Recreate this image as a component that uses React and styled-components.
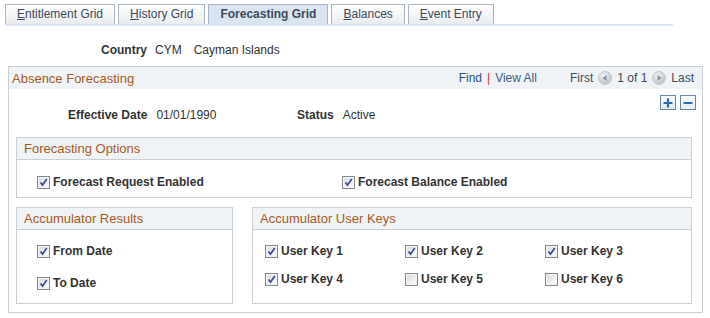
import styled, { createGlobalStyle } from "styled-components";

const GlobalStyle = createGlobalStyle`
  body {
    margin: 0;
    background: #fff;
    font-family: Arial, "Liberation Sans", sans-serif;
    font-size: 12px;
    color: #333;
  }
`;

const Page = styled.div`
  width: 710px;
  height: 318px;
  overflow: hidden;
`;

const TabBar = styled.div`
  display: flex;
  gap: 3px;
  margin: 4px 0 0 5px;
  width: 668px;
  border-bottom: 2px solid #dce6f2;
`;

const Tab = styled.div`
  height: 19px;
  line-height: 19px;
  padding: 0 11px;
  border: 1px solid #a9b6c4;
  border-bottom: none;
  color: #3c4a5b;
  font-weight: ${(p) => (p.$active ? "bold" : "normal")};
  background: ${(p) =>
    p.$active ? "#dbe5f1" : "linear-gradient(#ffffff, #e8ebee)"};
  u {
    text-decoration: underline;
  }
`;

const CountryRow = styled.div`
  display: flex;
  gap: 8px;
  padding: 17px 0 0 101px;
  height: 14px;
  line-height: 14px;
`;

const Label = styled.span`
  font-weight: bold;
  color: #333;
`;

const Value = styled.span`
  color: #333;
  margin-left: ${(p) => p.$gap || 0}px;
`;

const Panel = styled.div`
  margin: 9px 0 0 8px;
  width: 693px;
  border: 1px solid #c9cfd4;
`;

const PanelHeader = styled.div`
  display: flex;
  align-items: center;
  height: 22px;
  padding: 0 8px 0 3px;
  background: #f0f3f5;
`;

const Title = styled.div`
  color: #a85a1f;
  font-size: 13px;
  flex: 1;
`;

const NavLink = styled.span`
  color: ${(p) => p.$color || "#2a5288"};
`;

const Sep = styled.span`
  color: #c8362a;
  margin: 0 5px;
`;

const NavText = styled.span`
  color: #3c4a5b;
`;

const Nav = styled.div`
  display: flex;
  align-items: center;
  gap: 5px;
  margin-left: 33px;
`;

const Body = styled.div`
  padding: 6px 10px 8px 7px;
`;

const TopRow = styled.div`
  display: flex;
  align-items: flex-start;
`;

const Fields = styled.div`
  display: flex;
  margin: 13px 0 0 52px;
  line-height: 14px;
`;

const Field = styled.div`
  display: flex;
  gap: 9px;
  width: ${(p) => p.$w || "auto"};
`;

const Buttons = styled.div`
  display: flex;
  gap: 4px;
  margin-left: auto;
  margin-right: -4px;
`;

const SquareBtn = styled.div`
  width: 14px;
  height: 13px;
  border: 1px solid #6986a6;
  background: linear-gradient(#f7fafd, #e3ebf3);
  display: flex;
  align-items: center;
  justify-content: center;
`;

const Box = styled.div`
  border: 1px solid #c9cfd4;
  width: ${(p) => p.$w || "auto"};
  flex: ${(p) => (p.$grow ? 1 : "none")};
  margin-top: ${(p) => p.$mt || 0}px;
`;

const BoxHeader = styled.div`
  height: 21px;
  line-height: 21px;
  padding-left: 7px;
  background: #f0f3f5;
  border-bottom: 1px solid #c9cfd4;
  color: #a85a1f;
  font-size: 13px;
`;

const BoxRow = styled.div`
  display: flex;
  padding: ${(p) => p.$pad};
`;

const BoxesRow = styled.div`
  display: flex;
  gap: 19px;
  margin-top: 9px;
`;

const CheckList = styled.div`
  display: grid;
  grid-template-columns: ${(p) => p.$cols};
  row-gap: ${(p) => p.$gap}px;
  padding: ${(p) => p.$pad};
`;

const CheckItem = styled.label`
  display: flex;
  align-items: center;
  gap: 3px;
  font-weight: bold;
  color: #333;
  height: 14px;
  width: ${(p) => p.$w || "auto"};
`;

const Box13 = styled.span`
  width: 11px;
  height: 11px;
  border: 1px solid #85898d;
  box-shadow: inset 0 0 0 1px #f4f4f4;
  background: linear-gradient(135deg, #d6d8db, #ffffff);
  display: flex;
  align-items: center;
  justify-content: center;
`;

const Check = ({ checked, label, w }) => (
  <CheckItem $w={w}>
    <Box13>
      {checked && (
        <svg width="9" height="9" viewBox="0 0 9 9">
          <path d="M1.5 4.5 L3.5 7 L7.8 1" fill="none" stroke="#3a4b9c" strokeWidth="1.7" />
        </svg>
      )}
    </Box13>
    {label}
  </CheckItem>
);

const Arrow = ({ dir }) => (
  <svg width="14" height="14" viewBox="0 0 14 14">
    <defs>
      <radialGradient id={`g${dir}`} cx="0.4" cy="0.35" r="0.7">
        <stop offset="0" stopColor="#f4f5f6" />
        <stop offset="1" stopColor="#b9bdc2" />
      </radialGradient>
    </defs>
    <circle cx="7" cy="7" r="6.5" fill={`url(#g${dir})`} stroke="#c4c8cc" />
    {dir === "left" ? (
      <path d="M4.5 7 L8.5 4 L8.5 10 Z" fill="#8a9096" />
    ) : (
      <path d="M9.5 7 L5.5 4 L5.5 10 Z" fill="#8a9096" />
    )}
  </svg>
);

const tabs = [
  { u: "E", rest: "ntitlement Grid" },
  { u: "H", rest: "istory Grid" },
  { u: "", rest: "Forecasting Grid", active: true },
  { u: "B", rest: "alances" },
  { u: "E", rest: "vent Entry" },
];

export default function App() {
  return (
    <Page>
      <GlobalStyle />
      <TabBar>
        {tabs.map((t, i) => (
          <Tab key={i} $active={t.active}>
            {t.u && <u>{t.u}</u>}
            {t.rest}
          </Tab>
        ))}
      </TabBar>

      <CountryRow>
        <Label>Country</Label>
        <Value>CYM</Value>
        <Value $gap={4}>Cayman Islands</Value>
      </CountryRow>

      <Panel>
        <PanelHeader>
          <Title>Absence Forecasting</Title>
          <NavLink>Find</NavLink>
          <Sep>|</Sep>
          <NavLink $color="#3a5a86">View All</NavLink>
          <Nav>
            <NavText>First</NavText>
            <Arrow dir="left" />
            <NavText>1 of 1</NavText>
            <Arrow dir="right" />
            <NavText>Last</NavText>
          </Nav>
        </PanelHeader>

        <Body>
          <TopRow>
            <Fields>
              <Field $w="229px">
                <Label>Effective Date</Label>
                <Value>01/01/1990</Value>
              </Field>
              <Field>
                <Label>Status</Label>
                <Value>Active</Value>
              </Field>
            </Fields>
            <Buttons>
              <SquareBtn>
                <svg width="10" height="10" viewBox="0 0 10 10">
                  <path d="M5 0.5 V9.5 M0.5 5 H9.5" stroke="#2a6bb3" strokeWidth="2.2" />
                </svg>
              </SquareBtn>
              <SquareBtn>
                <svg width="10" height="10" viewBox="0 0 10 10">
                  <path d="M0.5 5 H9.5" stroke="#2a6bb3" strokeWidth="2" />
                </svg>
              </SquareBtn>
            </Buttons>
          </TopRow>

          <Box $mt={15}>
            <BoxHeader>Forecasting Options</BoxHeader>
            <BoxRow $pad="15px 0 8px 20px">
              <Check checked label="Forecast Request Enabled" w="305px" />
              <Check checked label="Forecast Balance Enabled" />
            </BoxRow>
          </Box>

          <BoxesRow>
            <Box $w="215px">
              <BoxHeader>Accumulator Results</BoxHeader>
              <CheckList $cols="1fr" $gap={18} $pad="14px 0 0 20px">
                <Check checked label="From Date" />
                <Check checked label="To Date" />
              </CheckList>
            </Box>
            <Box $grow>
              <BoxHeader>Accumulator User Keys</BoxHeader>
              <CheckList $cols="140px 140px 140px" $gap={14} $pad="14px 0 17px 12px">
                <Check checked label="User Key 1" />
                <Check checked label="User Key 2" />
                <Check checked label="User Key 3" />
                <Check checked label="User Key 4" />
                <Check label="User Key 5" />
                <Check label="User Key 6" />
              </CheckList>
            </Box>
          </BoxesRow>
        </Body>
      </Panel>
    </Page>
  );
}
